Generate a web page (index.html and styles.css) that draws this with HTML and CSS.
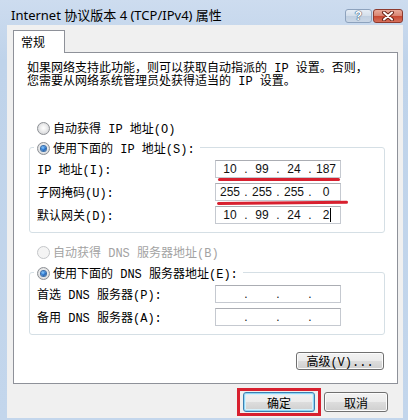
FILE: index.html
```html
<!DOCTYPE html>
<html lang="zh-CN">
<head>
<meta charset="utf-8">
<title>Internet 协议版本 4 (TCP/IPv4) 属性</title>
<link rel="stylesheet" href="styles.css">
</head>
<body>
<div class="window">
  <div class="titlebar">
    <span class="title">Internet 协议版本 4 (TCP/IPv4) 属性</span>
    <div class="caption-btns">
      <div class="cbtn help">?</div>
      <div class="cbtn close">
        <svg width="14" height="10" viewBox="0 0 14 10">
          <path d="M3 1.5 L11 8.5 M11 1.5 L3 8.5" stroke="#6b2418" stroke-width="4" stroke-linecap="round"/>
          <path d="M3 1.5 L11 8.5 M11 1.5 L3 8.5" stroke="#ffffff" stroke-width="2" stroke-linecap="round"/>
        </svg>
      </div>
    </div>
  </div>
  <div class="client">
    <div class="tabs"><div class="tab">常规</div></div>
    <div class="panel">
      <p class="intro">如果网络支持此功能，则可以获取自动指派的 IP 设置。否则，<br>您需要从网络系统管理员处获得适当的 IP 设置。</p>

      <div class="radio-row first"><span class="radio"></span><span>自动获得 IP 地址(O)</span></div>
      <div class="group">
        <div class="radio-row legend"><span class="radio checked"></span><span>使用下面的 IP 地址(S):</span></div>
        <div class="field-row"><span class="label">IP 地址(I):</span>
          <div class="ipbox mark-a"><span>10</span><span>.</span><span>99</span><span>.</span><span>24</span><span>.</span><span>187</span></div>
        </div>
        <div class="field-row"><span class="label">子网掩码(U):</span>
          <div class="ipbox mark-b"><span>255</span><span>.</span><span>255</span><span>.</span><span>255</span><span>.</span><span>0</span></div>
        </div>
        <div class="field-row"><span class="label">默认网关(D):</span>
          <div class="ipbox"><span>10</span><span>.</span><span>99</span><span>.</span><span>24</span><span>.</span><span class="cursor-seg">2<i class="caret"></i></span></div>
        </div>
      </div>

      <div class="radio-row dns-auto disabled"><span class="radio"></span><span>自动获得 DNS 服务器地址(B)</span></div>
      <div class="group group-dns">
        <div class="radio-row legend"><span class="radio checked"></span><span>使用下面的 DNS 服务器地址(E):</span></div>
        <div class="field-row"><span class="label">首选 DNS 服务器(P):</span>
          <div class="ipbox"><span></span><span>.</span><span></span><span>.</span><span></span><span>.</span><span></span></div>
        </div>
        <div class="field-row"><span class="label">备用 DNS 服务器(A):</span>
          <div class="ipbox"><span></span><span>.</span><span></span><span>.</span><span></span><span>.</span><span></span></div>
        </div>
      </div>

      <div class="btn advanced">高级(V)...</div>
    </div>
    <div class="actions">
      <div class="highlight"><div class="btn default ok">确定</div></div>
      <div class="btn cancel">取消</div>
    </div>
  </div>
</div>
</body>
</html>
```

FILE: styles.css
```css
html, body {
  margin: 0;
  padding: 0;
}
body {
  width: 408px;
  height: 420px;
  overflow: hidden;
  font-family: "Liberation Mono", "Noto Sans CJK SC", monospace;
  font-size: 12px;
  color: #000;
}
.window {
  width: 408px;
  height: 420px;
  box-sizing: border-box;
  background: linear-gradient(#cddcef, #bfd3ea 60px, #c3d6ec);
  display: flex;
  flex-direction: column;
}
.titlebar {
  height: 25px;
  flex: none;
  display: flex;
  justify-content: space-between;
  padding: 0 5px 0 11px;
}
.title {
  font-family: "Noto Sans", "Noto Sans CJK SC", sans-serif;
  font-size: 13px;
  line-height: 22px;
  padding-top: 4px;
  color: #000;
  white-space: nowrap;
}
.caption-btns {
  display: flex;
  gap: 1px;
  padding-top: 9px;
}
.cbtn {
  height: 14px;
  box-sizing: border-box;
  border-radius: 3px;
  display: flex;
  align-items: center;
  justify-content: center;
}
.help {
  width: 27px;
  border: 1px solid #8da2bd;
  background: linear-gradient(#e6edf5, #d3deea 50%, #c0cfe0 50%, #cbd8e7);
  font-family: "Liberation Sans", sans-serif;
  font-weight: bold;
  font-size: 12px;
  color: #ffffff;
  text-shadow: 0 0 1px #3b5877, 0 0 1px #3b5877, 0 0 1px #3b5877;
}
.close {
  width: 30px;
  border: 1px solid #8d3a2e;
  background: linear-gradient(#e9a999, #d88371 50%, #c6452f 50%, #d6705c);
}
.client {
  flex: 1;
  margin: 0 5px 2px 7px;
  background: #f0f0f0;
  padding: 5px 5px 0 6px;
  display: flex;
  flex-direction: column;
}
.tabs {
  display: flex;
  height: 22px;
  position: relative;
  z-index: 1;
}
.tab {
  width: 52px;
  height: 23px;
  box-sizing: border-box;
  border: 1px solid #8e9199;
  border-bottom: none;
  background: #ffffff;
  padding-left: 7px;
  font-family: "Noto Sans CJK SC", sans-serif;
  font-size: 12px;
  line-height: 22px;
}
.panel {
  border: 1px solid #8e9199;
  background: #ffffff;
  padding: 10px 12px 13px 15px;
  display: flex;
  flex-direction: column;
}
.intro {
  margin: 0 0 0 -2px;
  line-height: 13px;
  white-space: nowrap;
}
.radio-row {
  height: 20px;
  display: flex;
  align-items: center;
  gap: 3px;
  margin-left: 8px;
  white-space: nowrap;
}
.radio-row.first {
  margin-top: 29px;
}
.radio {
  width: 13px;
  height: 13px;
  box-sizing: border-box;
  border-radius: 50%;
  border: 1px solid #8c8f94;
  background: radial-gradient(circle at 50% 45%, #ffffff 0, #f0f0f0 35%, #d4d6d9 80%);
  display: flex;
  align-items: center;
  justify-content: center;
}
.radio.checked::after {
  content: "";
  width: 5px;
  height: 5px;
  border-radius: 50%;
  background: radial-gradient(circle at 40% 35%, #8fd0ff 0, #2f7bd3 45%, #0d3c7c 100%);
  box-shadow: 0 0 0 1px #3a6ea8;
}
.disabled {
  color: #a3a3a3;
}
.disabled .radio {
  border-color: #c4c6c9;
  background: #f4f4f4;
}
.group {
  margin-top: 9px;
  border: 1px solid #d5dfe5;
  border-radius: 3px;
  padding: 0 0 8px 7px;
  display: flex;
  flex-direction: column;
}
.legend {
  align-self: flex-start;
  margin: -10px 0 0 -3px;
  padding: 0 5px 0 3px;
  background: #ffffff;
}
.dns-auto {
  margin-top: 9px;
}
.group-dns {
  margin-top: 10px;
}
.field-row {
  display: flex;
  align-items: center;
  height: 18px;
  margin-top: 5px;
}
.legend + .field-row {
  margin-top: 2px;
}
.label {
  width: 178px;
  white-space: nowrap;
}
.ipbox {
  position: relative;
  width: 126px;
  height: 18px;
  box-sizing: border-box;
  border: 1px solid #c5c9d0;
  border-top-color: #abadb3;
  background: #ffffff;
  padding-left: 2px;
  display: grid;
  grid-template-columns: 24px 8px 24px 8px 24px 8px 24px;
  align-items: center;
  text-align: center;
  font-family: "Liberation Sans", sans-serif;
  font-size: 12px;
  line-height: 16px;
  color: #111;
}
.caret {
  display: inline-block;
  width: 1px;
  height: 14px;
  background: #000;
  vertical-align: -3px;
  margin-left: 1px;
}
.cursor-seg {
  padding-left: 2px;
}
.mark-a::after,
.mark-b::after {
  content: "";
  position: absolute;
  height: 3px;
  border-radius: 2px;
  background: #d8202f;
}
.mark-a::after {
  left: 2px;
  width: 122px;
  top: 17px;
}
.mark-b::after {
  left: 1px;
  width: 131px;
  top: 18px;
  transform: rotate(-0.6deg);
  transform-origin: left center;
}
.btn {
  box-sizing: border-box;
  height: 20px;
  border: 1px solid #707070;
  border-radius: 3px;
  background: linear-gradient(#f2f2f2, #ebebeb 50%, #dddddd 50%, #cfcfcf);
  box-shadow: inset 0 0 0 1px #fcfcfc;
  display: flex;
  align-items: center;
  justify-content: center;
  font-family: "Noto Sans CJK SC", sans-serif;
  font-size: 12px;
  white-space: nowrap;
}
.advanced {
  align-self: flex-end;
  width: 88px;
  height: 18px;
  margin-top: 17px;
  margin-right: 1px;
  font-family: "Liberation Mono", "Noto Sans CJK SC", monospace;
}
.actions {
  display: flex;
  justify-content: flex-end;
  align-items: center;
  margin-top: 4px;
  padding-right: 10px;
}
.highlight {
  border: 3px solid #d8202f;
  padding: 1px 3px;
}
.ok {
  width: 72px;
}
.default {
  border-color: #3c7fb1;
  box-shadow: inset 0 0 0 1px #8fd6f5, inset 0 0 0 2px #d6f0fb;
}
.cancel {
  width: 64px;
  margin-left: 3px;
}
```
